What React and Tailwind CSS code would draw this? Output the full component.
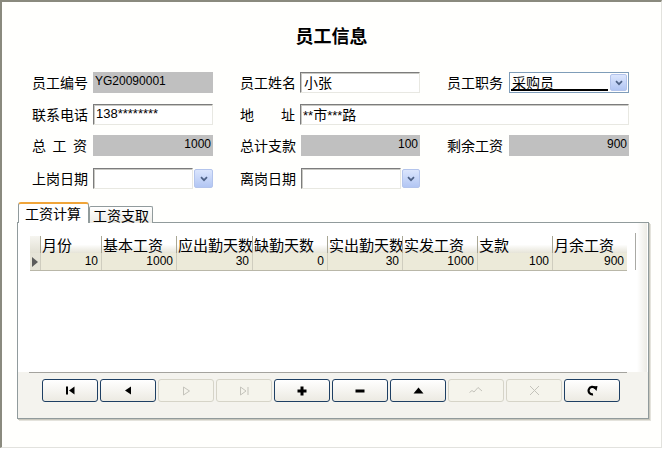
import React from "react";

const cjk = "font-['Noto_Sans_CJK_SC','Noto_Sans',sans-serif]";
const lat = "font-['Liberation_Sans',Arial,sans-serif]";

function Chevron() {
  return (
    <svg width="8" height="6" viewBox="0 0 8 6">
      <path d="M1 1.2 L4 4.2 L7 1.2" fill="none" stroke="#4d6185" strokeWidth="1.7" />
    </svg>
  );
}

function DropBtn({ cls }) {
  return (
    <div className={"flex items-center justify-center rounded-[2px] border border-[#b3c4ec] bg-gradient-to-b from-[#dce6fd] to-[#b2c6f3] " + cls}>
      <Chevron />
    </div>
  );
}

const sunken =
  "border border-t-[#7c7c7c] border-l-[#7c7c7c] border-r-[#e8e8e2] border-b-[#e8e8e2] bg-white shadow-[inset_1px_1px_0_#c9c9c4]";

function Label({ children, w }) {
  return <div className={"text-[14px] leading-[21px] text-black whitespace-nowrap " + cjk + " " + w}>{children}</div>;
}

function GrayBox({ children, right }) {
  return (
    <div className={"h-[21px] w-[120px] bg-[#c0c0c0] px-[2px] pt-[1px] text-[12px] leading-[16px] text-black " + lat + (right ? " text-right" : "")}>
      {children}
    </div>
  );
}

const cols = [
  { t: "月份", w: "w-[61px]", v: "10" },
  { t: "基本工资", w: "w-[75px]", v: "1000" },
  { t: "应出勤天数", w: "w-[76px]", v: "30" },
  { t: "缺勤天数", w: "w-[75px]", v: "0" },
  { t: "实出勤天数", w: "w-[75px]", v: "30" },
  { t: "实发工资", w: "w-[75px]", v: "1000" },
  { t: "支款", w: "w-[75px]", v: "100" },
  { t: "月余工资", w: "w-[75px]", v: "900" },
];

const ic = {
  first: (
    <svg width="9" height="9" viewBox="0 0 9 9">
      <rect x="0" y="0.5" width="2" height="8" fill="#000" />
      <path d="M8.5 0.5 L3 4.5 L8.5 8.5Z" fill="#000" />
    </svg>
  ),
  prior: (
    <svg width="8" height="9" viewBox="0 0 8 9">
      <path d="M7 0.5 L1 4.5 L7 8.5Z" fill="#000" />
    </svg>
  ),
  next: (
    <svg width="9" height="10" viewBox="0 0 9 10">
      <path d="M1.5 1 L7.5 5 L1.5 9Z" fill="none" stroke="#c4c3bb" strokeWidth="1" />
    </svg>
  ),
  last: (
    <svg width="11" height="10" viewBox="0 0 11 10">
      <path d="M1.5 1 L7 5 L1.5 9Z" fill="none" stroke="#c4c3bb" strokeWidth="1" />
      <path d="M9 1 L9 9" stroke="#c4c3bb" strokeWidth="1" />
    </svg>
  ),
  plus: (
    <svg width="10" height="10" viewBox="0 0 10 10">
      <rect x="3.5" y="0.5" width="3" height="9" fill="#000" />
      <rect x="0.5" y="3.5" width="9" height="3" fill="#000" />
    </svg>
  ),
  minus: (
    <svg width="10" height="4" viewBox="0 0 10 4">
      <rect x="0.5" y="0.5" width="9" height="3" fill="#000" />
    </svg>
  ),
  edit: (
    <svg width="11" height="7" viewBox="0 0 11 7">
      <path d="M0.5 6.5 L5.5 0.5 L10.5 6.5Z" fill="#000" />
    </svg>
  ),
  post: (
    <svg width="14" height="9" viewBox="0 0 14 9">
      <path d="M0.5 6.5 L3 4.5 L5 6 L9 1.5 L13 5" fill="none" stroke="#c4c3bb" strokeWidth="1" />
    </svg>
  ),
  cancel: (
    <svg width="11" height="11" viewBox="0 0 11 11">
      <path d="M1 1 L10 10 M10 1 L1 10" fill="none" stroke="#c4c3bb" strokeWidth="1" />
    </svg>
  ),
  refresh: (
    <svg width="11" height="11" viewBox="0 0 11 11">
      <path d="M8.3 3.2 A3.8 3.8 0 1 0 6 9.4" fill="none" stroke="#000" strokeWidth="2.2" />
      <path d="M5.5 1.5 L10.5 1 L9.5 6Z" fill="#000" />
    </svg>
  ),
};

const buttons = [
  ["first", true],
  ["prior", true],
  ["next", false],
  ["last", false],
  ["plus", true],
  ["minus", true],
  ["edit", true],
  ["post", false],
  ["cancel", false],
  ["refresh", true],
];

export default function App() {
  return (
    <div className={"w-[665px] h-[450px] overflow-hidden bg-white " + cjk}>
      <div className="h-[448px] w-[662px] border-l-2 border-t-2 border-r border-b border-l-[#8a8a7e] border-t-[#8a8a7e] border-r-[#e2e2de] border-b-[#e2e2de] bg-[#fffffd]">
        {/* title */}
        <div className="pt-[21px] text-center text-[18px] font-bold leading-[24px] text-black">员工信息</div>

        {/* form */}
        <div className="mt-[25px] pl-[30px]">
          <div className="flex h-[21px] items-center">
            <Label w="w-[61px]">员工编号</Label>
            <GrayBox>YG20090001</GrayBox>
            <div className="w-[27px]" />
            <Label w="w-[60px]">员工姓名</Label>
            <div className={"h-[21px] w-[120px] px-[3px] text-[14px] leading-[18px] " + sunken}>小张</div>
            <div className="w-[27px]" />
            <Label w="w-[62px]">员工职务</Label>
            <div className="flex h-[21px] w-[120px] items-center border border-[#7f9db9] bg-white pl-[1px] pr-[1px]">
              <div className="mr-[2px] h-[17px] flex-1 border-b-2 border-black px-[1px] text-[14px] leading-[16px]">采购员</div>
              <DropBtn cls="h-[17px] w-[17px]" />
            </div>
          </div>

          <div className="mt-[11px] flex h-[21px] items-center">
            <Label w="w-[61px]">联系电话</Label>
            <div className={"h-[21px] w-[120px] px-[2px] text-[13px] leading-[18px] " + lat + " " + sunken}>138********</div>
            <div className="w-[27px]" />
            <div className="flex w-[60px] justify-between pr-[5px]">
              <Label w="">地</Label>
              <Label w="">址</Label>
            </div>
            <div className={"h-[21px] w-[329px] px-[2px] text-[14px] leading-[18px] " + sunken}>
              <span className={lat + " text-[13px]"}>**</span>市<span className={lat + " text-[13px]"}>***</span>路
            </div>
          </div>

          <div className="mt-[10px] flex h-[21px] items-center">
            <div className="flex w-[61px] justify-between pr-[6px]">
              <Label w="">总</Label>
              <Label w="">工</Label>
              <Label w="">资</Label>
            </div>
            <GrayBox right>1000</GrayBox>
            <div className="w-[27px]" />
            <Label w="w-[61px]">总计支款</Label>
            <div className="w-[119px]">
              <div className={"h-[21px] w-[119px] bg-[#c0c0c0] px-[2px] pt-[1px] text-right text-[12px] leading-[16px] " + lat}>100</div>
            </div>
            <div className="w-[27px]" />
            <Label w="w-[62px]">剩余工资</Label>
            <GrayBox right>900</GrayBox>
          </div>

          <div className="mt-[12px] flex h-[21px] items-center">
            <Label w="w-[61px]">上岗日期</Label>
            <div className={"h-[21px] w-[100px] " + sunken} />
            <DropBtn cls="ml-[1px] h-[19px] w-[19px]" />
            <div className="w-[27px]" />
            <Label w="w-[61px]">离岗日期</Label>
            <div className={"h-[21px] w-[100px] " + sunken} />
            <DropBtn cls="ml-[1px] h-[19px] w-[18px]" />
          </div>
        </div>

        {/* tabs + panel */}
        <div className="ml-[15px] mt-[13px] w-[633px]">
          <div className="relative z-10 -mb-px flex h-[21px] items-end pl-[1px]">
            <div className="h-[21px] w-[71px] rounded-t-[3px] border-x border-t-2 border-x-[#919b9c] border-t-[#f0a53a] bg-white px-[6px] text-[14px] leading-[18px]">
              工资计算
            </div>
            <div className="h-[17px] w-[64px] rounded-t-[2px] border border-b-0 border-[#919b9c] bg-gradient-to-b from-white to-[#ecebe6] px-[3px] text-[14px] leading-[16px]">
              工资支取
            </div>
          </div>
          <div className="h-[197px] w-[632px] border border-[#919b9c] shadow-[1px_1px_0_#c8c7bd,2px_2px_0_#e4e3dc]">
            <div className="flex h-[149px] bg-white">
              <div className="pl-[12px] pt-[13px]">
                {/* header */}
                <div className="flex h-[17px]">
                  <div className="h-[17px] w-[10px] bg-gradient-to-b from-[#f6f5f0] to-[#e2e0d4]" />
                  {cols.map((c) => (
                    <div
                      key={c.t}
                      className={"h-[17px] overflow-x-clip whitespace-nowrap border-l border-[#a9a795] bg-gradient-to-b from-white via-white to-[#e6e4d8] pl-[1px] text-[15px] leading-[17px] " + c.w}
                    >
                      {c.t}
                    </div>
                  ))}
                </div>
                {/* data row */}
                <div className="flex h-[18px] border-b border-[#b9b7a8]">
                  <div className="flex h-[17px] w-[10px] items-center justify-center bg-[#e6e4d8]">
                    <svg width="6" height="10" viewBox="0 0 6 10">
                      <path d="M0 0 L6 5 L0 10Z" fill="#5c5c5c" />
                    </svg>
                  </div>
                  {cols.map((c) => (
                    <div
                      key={c.t}
                      className={"h-[17px] border-l border-[#cfcdbf] bg-[#ecead9] pr-[3px] text-right text-[12px] leading-[17px] " + lat + " " + c.w}
                    >
                      {c.v}
                    </div>
                  ))}
                </div>
              </div>
              <div className="ml-[8px] mt-[10px] h-[37px] w-px bg-[#a9a9a4]" />
              <div className="ml-[1px] h-full w-[10px] bg-gradient-to-r from-white to-[#ecebe5]" />
            </div>
            <div className="h-[46px] bg-[#f4f3ee]">
              <div className="ml-[11px] h-px w-[598px] bg-[#a4a39e]" />
              <div className="ml-[24px] mt-[6px] flex gap-[2px]">
                {buttons.map(([k, en]) => (
                  <div
                    key={k}
                    className={
                      en
                        ? "flex h-[23px] w-[56px] items-center justify-center rounded-[3px] border border-[#1e3f63] bg-gradient-to-b from-white to-[#eceae2]"
                        : "flex h-[23px] w-[56px] items-center justify-center rounded-[3px] border border-[#d6d4c8] bg-[#f5f4ec]"
                    }
                  >
                    {ic[k]}
                  </div>
                ))}
              </div>
            </div>
          </div>
        </div>
      </div>
    </div>
  );
}
